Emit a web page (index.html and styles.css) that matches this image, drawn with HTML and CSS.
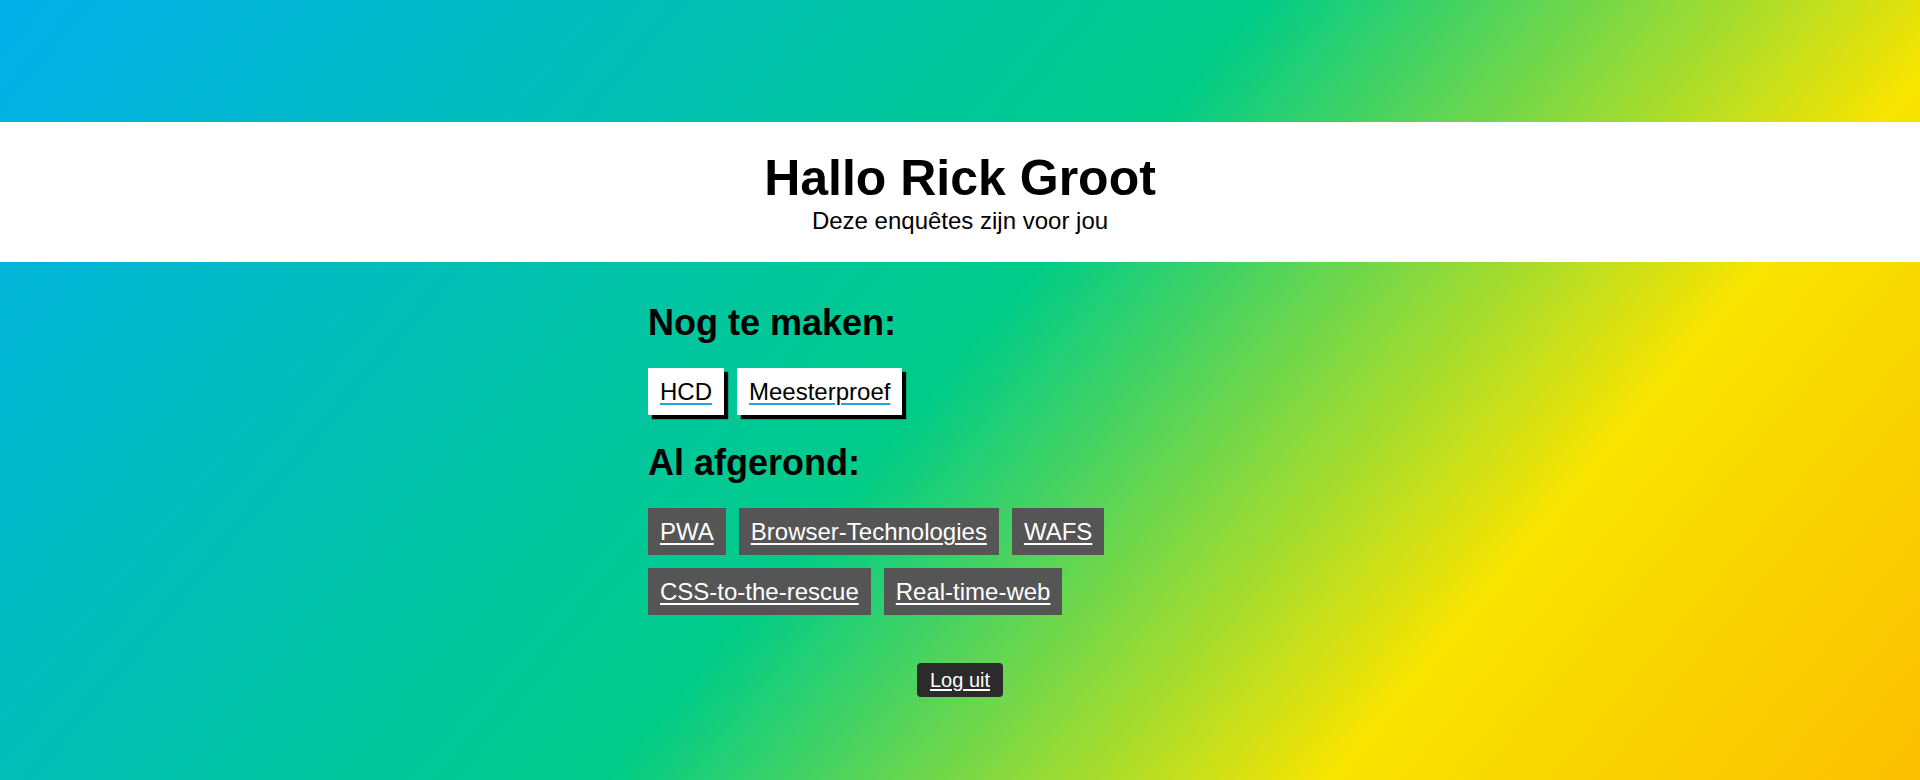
FILE: index.html
```html
<!DOCTYPE html>
<html lang="nl">
<head>
<meta charset="utf-8">
<title>Enquêtes</title>
<link rel="stylesheet" href="styles.css">
</head>
<body>
<div class="top-band"></div>
<header class="hero">
  <h1 class="hero-title">Hallo Rick Groot</h1>
  <p class="hero-sub">Deze enquêtes zijn voor jou</p>
</header>
<main class="content">
  <h2 class="section-title">Nog te maken:</h2>
  <div class="chips">
    <a class="chip chip-open" href="#">HCD</a>
    <a class="chip chip-open" href="#">Meesterproef</a>
  </div>
  <h2 class="section-title section-title-2">Al afgerond:</h2>
  <div class="chips">
    <a class="chip chip-done" href="#">PWA</a>
    <a class="chip chip-done" href="#">Browser-Technologies</a>
    <a class="chip chip-done" href="#">WAFS</a>
    <a class="chip chip-done" href="#">CSS-to-the-rescue</a>
    <a class="chip chip-done" href="#">Real-time-web</a>
  </div>
  <div class="logout-row">
    <a class="logout" href="#">Log uit</a>
  </div>
</main>
</body>
</html>
```

FILE: styles.css
```css
html, body {
  margin: 0;
  padding: 0;
}
body {
  min-height: 780px;
  font-family: "Liberation Sans", Arial, sans-serif;
  color: #000;
  background: linear-gradient(130deg, #02afea 0%, #00cc88 49%, #f8e400 77%, #fbbf00 100%);
}
.top-band {
  height: 122px;
}
.hero {
  box-sizing: border-box;
  background: #fff;
  text-align: center;
  padding-top: 28px;
  height: 140px;
}
.hero-title {
  margin: 0;
  font-size: 50px;
  line-height: 57px;
  font-weight: bold;
}
.hero-sub {
  margin: 0;
  font-size: 24px;
  line-height: 27px;
}
.content {
  width: 624px;
  margin: 0 auto;
  padding-top: 40px;
}
.section-title {
  margin: 0;
  font-size: 36px;
  line-height: 41px;
  font-weight: bold;
}
.section-title-2 {
  margin-top: 27px;
}
.chips {
  display: flex;
  flex-wrap: wrap;
  gap: 13px 13px;
  margin-top: 25px;
}
.chip {
  display: block;
  font-size: 24px;
  line-height: 27px;
  padding: 10px 12px;
  text-decoration: underline;
  text-decoration-thickness: 2px;
  text-underline-offset: 3px;
}
.chip-open {
  background: #fff;
  color: #000;
  text-decoration-color: #1ea2e0;
  box-shadow: 4px 4px 1px #000;
}
.chip-done {
  background: #555555;
  color: #fff;
  text-decoration-color: #fff;
}
.logout-row {
  display: flex;
  justify-content: center;
  margin-top: 48px;
}
.logout {
  display: block;
  background: #2b2b2b;
  color: #fff;
  font-size: 20px;
  line-height: 24px;
  padding: 5px 13px;
  border-radius: 4px;
  text-decoration: underline;
  text-underline-offset: 2px;
}
```
